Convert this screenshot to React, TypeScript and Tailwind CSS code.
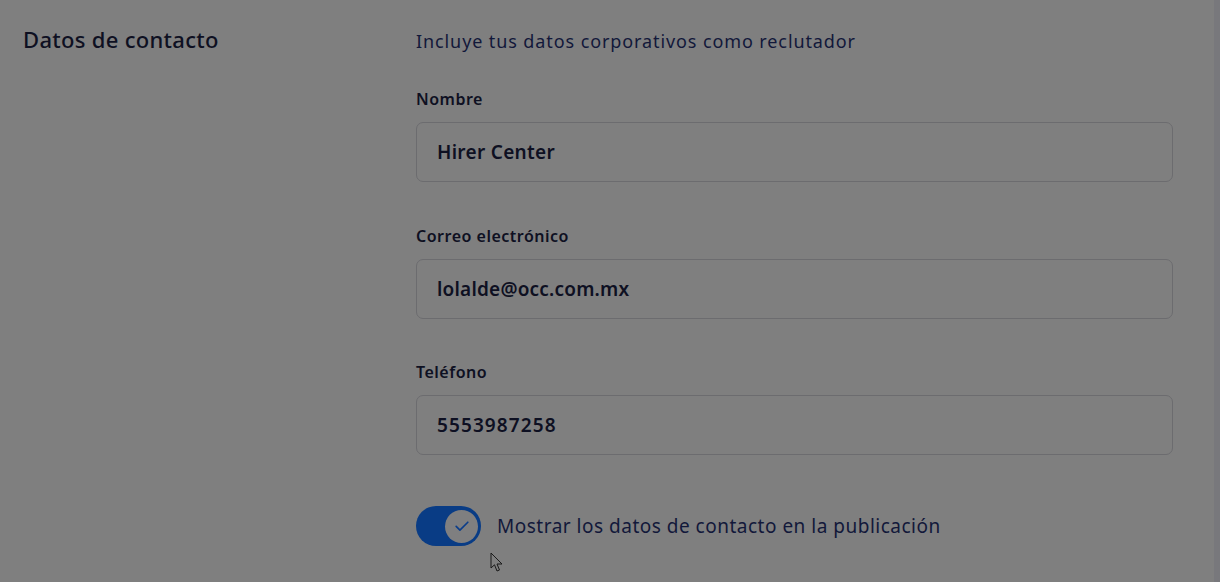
import React from "react";

function Field({ label, value, labelMt, valueTracking }: { label: string; value: string; labelMt: string; valueTracking: string }) {
  return (
    <div className={labelMt}>
      <div className="text-[16px] leading-[24px] font-semibold tracking-[0.5px] text-[#0e1022]">{label}</div>
      <div className="mt-[11px] h-[60px] w-[757px] rounded-[7px] border border-[#6c6c6f] flex items-center pl-[20px]">
        <span className={`text-[19px] font-semibold text-[#0e1022] ${valueTracking}`}>{value}</span>
      </div>
    </div>
  );
}

export default function App() {
  return (
    <div
      className="relative h-[582px] w-[1220px] bg-[#7f7f7f] flex overflow-hidden"
      style={{ fontFamily: '"Noto Sans", "Open Sans", sans-serif' }}
    >
      <div className="w-[416px] pl-[23px] pt-[24px]">
        <h2 className="text-[22px] leading-[30px] font-medium tracking-[0.3px] text-[#0e1022]">Datos de contacto</h2>
      </div>
      <div className="flex-1 pt-[27px]">
        <p className="text-[18px] leading-[28px] tracking-[0.9px] text-[#12183a]">Incluye tus datos corporativos como reclutador</p>
        <Field label="Nombre" value="Hirer Center" labelMt="mt-[32px]" valueTracking="tracking-[0.3px]" />
        <Field label="Correo electrónico" value="lolalde@occ.com.mx" labelMt="mt-[42px]" valueTracking="tracking-[0.2px]" />
        <Field label="Teléfono" value="5553987258" labelMt="mt-[41px]" valueTracking="tracking-[1.1px]" />
        <div className="mt-[51px] flex items-center gap-[16px]">
          <div className="h-[40px] w-[65px] rounded-full bg-[#093c85] flex items-center justify-end pr-[3px]">
            <div className="h-[33px] w-[33px] rounded-full bg-[#7f7f80] flex items-center justify-center">
              <svg width="20" height="20" viewBox="0 0 24 24" fill="none" stroke="#0b3d8a" strokeWidth="2" strokeLinecap="round" strokeLinejoin="round">
                <path d="M5 12.5l4.5 4.5L19 7.5" />
              </svg>
            </div>
          </div>
          <span className="text-[19px] tracking-[0.5px] text-[#12183a]">Mostrar los datos de contacto en la publicación</span>
        </div>
      </div>
      <div className="w-[6px] bg-[#78787c]" />
      <svg className="absolute left-[490px] top-[552px]" width="14" height="21" viewBox="0 0 14 21">
        <path d="M1 1 L1 16 L4.5 12.8 L7 19 L9.5 18 L7 12 L12 12 Z" fill="#7f7f7f" stroke="#1a1a1a" strokeWidth="1" strokeLinejoin="round" />
      </svg>
    </div>
  );
}
